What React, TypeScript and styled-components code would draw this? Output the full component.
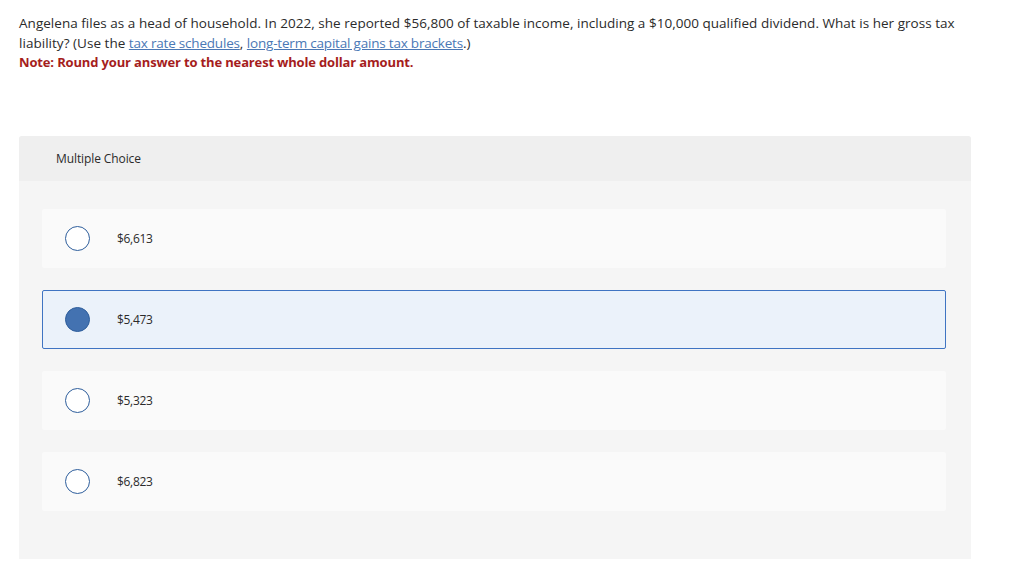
import React from "react";
import styled, { createGlobalStyle } from "styled-components";

const Global = createGlobalStyle`
  html, body { margin: 0; padding: 0; background: #fff; }
  body { font-family: "Open Sans", "Liberation Sans", Arial, sans-serif; color: #2b2b2b; }
`;

const Page = styled.div`
  padding: 14px 53px 24px 19px;
  width: 1024px;
  box-sizing: border-box;
`;

const Question = styled.div`
  font-size: 13.5px;
  line-height: 19.5px;
  color: #2b2b2b;
  letter-spacing: 0.03px;
`;

const Run = styled.span``;

const Link = styled.a`
  color: #4a78b5;
  text-decoration: underline;
  letter-spacing: -0.2px;
`;

const Note = styled.div`
  color: #a51d1d;
  font-weight: 700;
  font-size: 13px;
  line-height: 19.5px;
  letter-spacing: -0.15px;
`;

const Panel = styled.div`
  margin-top: 63px;
  width: 952px;
  background: #f5f5f5;
  border-radius: 3px 3px 0 0;
  overflow: hidden;
`;

const PanelHeader = styled.div`
  height: 45px;
  background: #efefef;
  display: flex;
  align-items: center;
  padding-left: 37px;
  font-size: 12px;
  letter-spacing: -0.1px;
  color: #2b2b2b;
`;

const Options = styled.div`
  display: flex;
  flex-direction: column;
  gap: 22px;
  padding: 28px 25px 48px 23px;
`;

const Option = styled.div<{ $selected?: boolean }>`
  height: 59px;
  box-sizing: border-box;
  display: flex;
  align-items: center;
  padding-left: 22px;
  background: ${(p) => (p.$selected ? "#ebf2fa" : "#fafafa")};
  border: 1px solid ${(p) => (p.$selected ? "#3f74c2" : "transparent")};
  border-radius: 2px;
`;

const Radio = styled.span<{ $selected?: boolean }>`
  width: 25px;
  height: 25px;
  box-sizing: border-box;
  border-radius: 50%;
  border: 1px solid #2e5e9c;
  background: ${(p) => (p.$selected ? "#4372b1" : "#fff")};
  flex: none;
`;

const Label = styled.span`
  margin-left: 27px;
  font-size: 12px;
  letter-spacing: -0.3px;
  color: #2b2b2b;
`;

const choices = ["$6,613", "$5,473", "$5,323", "$6,823"];

export default function App() {
  return (
    <>
      <Global />
      <Page>
        <Question>
          <Run>
            Angelena files as a head of household. In 2022, she reported $56,800 of taxable income, including a $10,000 qualified dividend. What is her gross tax
          </Run>{" "}
          <Run>liability? (Use the</Run> <Link>tax rate schedules</Link>
          <Run>,</Run> <Link>long-term capital gains tax brackets</Link>
          <Run>.)</Run>
        </Question>
        <Note>Note: Round your answer to the nearest whole dollar amount.</Note>
        <Panel>
          <PanelHeader>Multiple Choice</PanelHeader>
          <Options>
            {choices.map((c, i) => (
              <Option key={c} $selected={i === 1}>
                <Radio $selected={i === 1} />
                <Label>{c}</Label>
              </Option>
            ))}
          </Options>
        </Panel>
      </Page>
    </>
  );
}
